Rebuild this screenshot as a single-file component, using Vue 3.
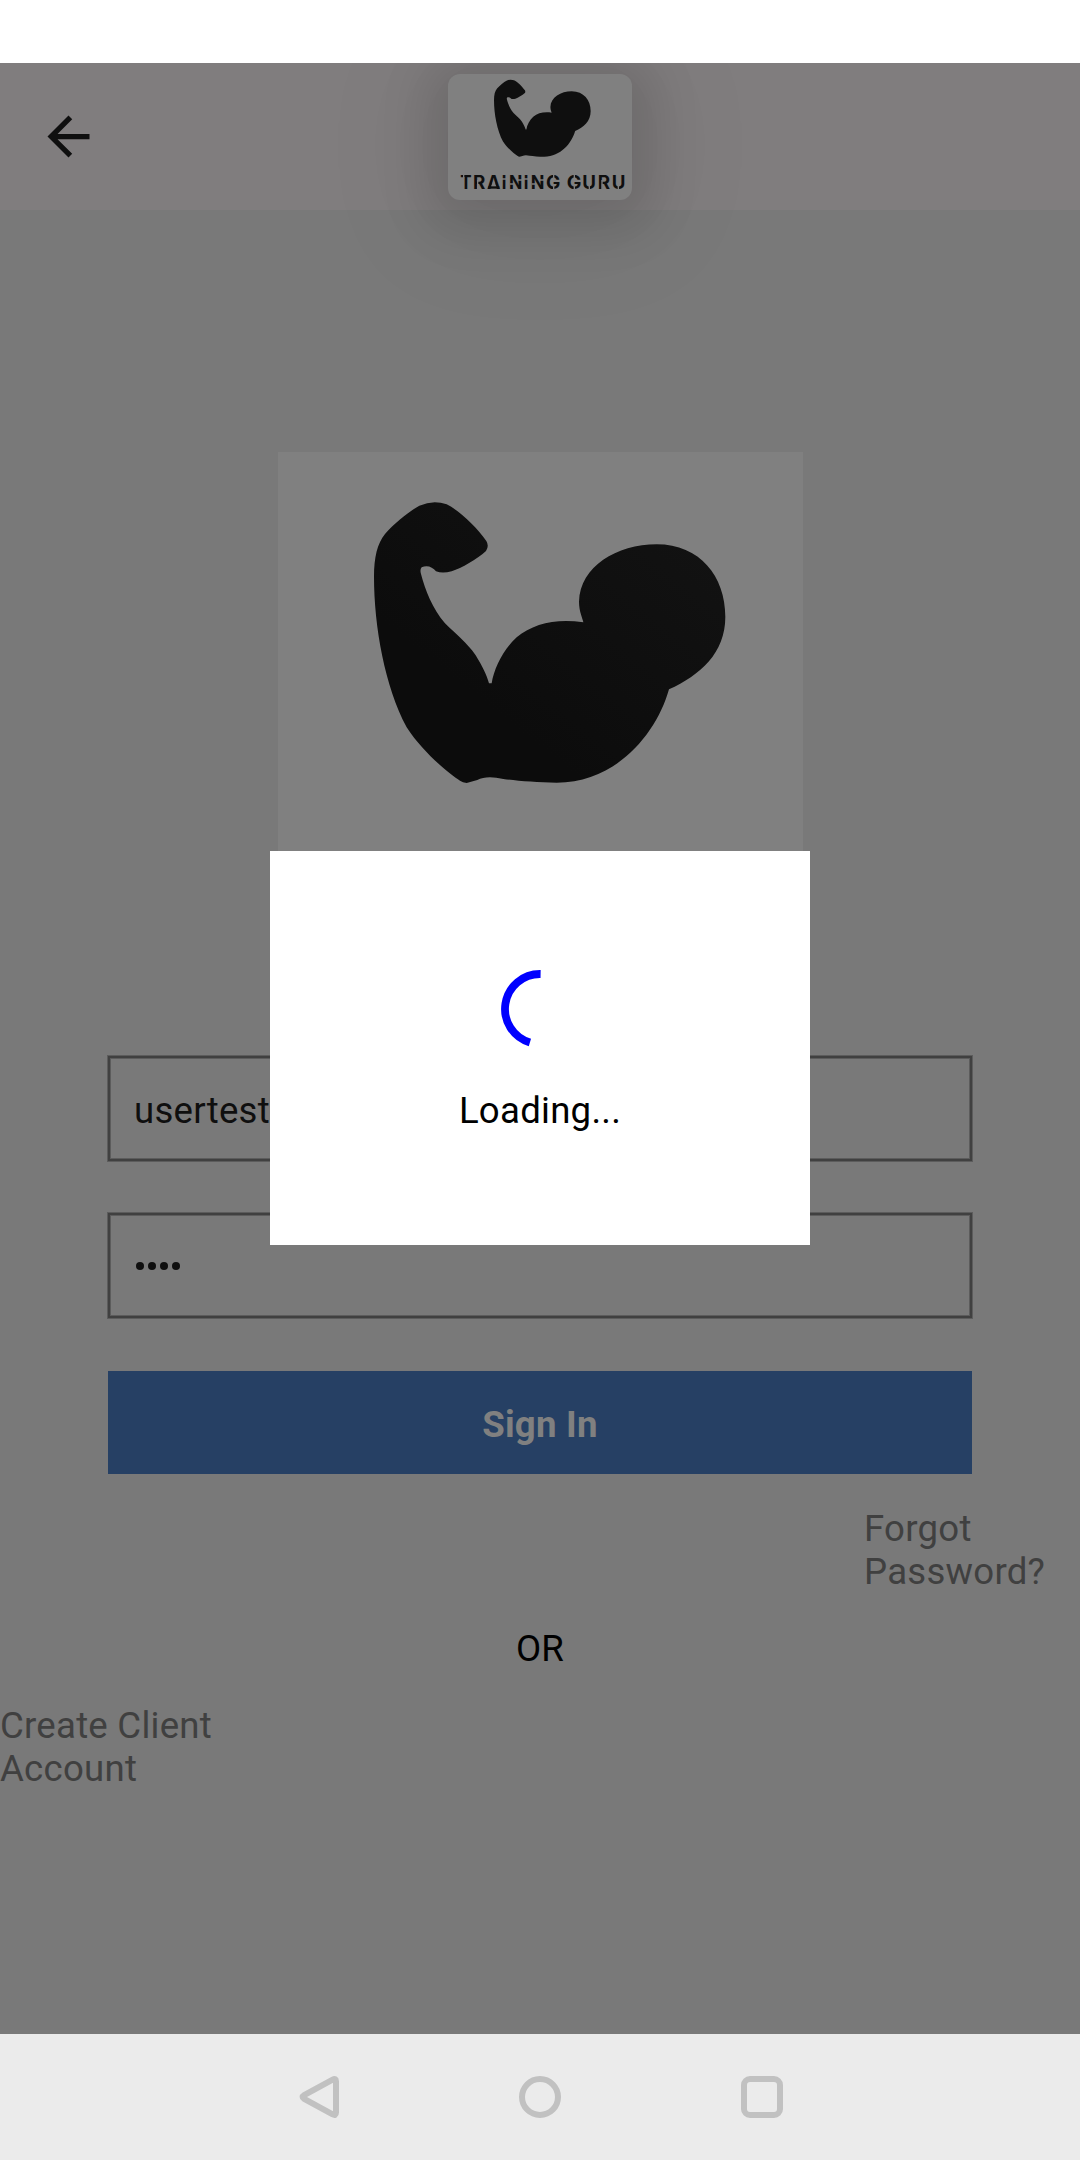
<script setup>
const armPath =
  'M312 410C312 352 322 310 345 282C375 248 420 212 448 197Q490 178 530 193C572 214 620 262 649 303Q658 318 648 333C620 358 575 384 545 394Q517 401 498 394C488 380 470 374 455 382Q449 389 453 402C465 448 488 508 525 550C560 585 590 607 617 646C638 680 650 706 657 730L665 730C672 685 700 628 740 592C790 550 860 535 940 547C938 535 927 515 927 485C930 380 1040 313 1160 313C1290 313 1366 410 1366 530C1366 640 1290 705 1197 748C1160 880 1040 1028 860 1028C800 1028 740 1022 700 1017Q650 1005 622 1020L590 1029Q578 1028 570 1022C540 1002 460 940 410 862C345 740 312 560 312 410Z'

const wordmark = [
  { ch: 'T', x: 121, w: 34 },
  { ch: 'R', x: 159, w: 37 },
  { ch: 'A', x: 201, w: 40 },
  { ch: 'I', x: 245, w: 14 },
  { ch: 'N', x: 267, w: 40 },
  { ch: 'I', x: 311, w: 14 },
  { ch: 'N', x: 332, w: 41 },
  { ch: 'G', x: 378, w: 43 },
  { ch: 'G', x: 440, w: 44 },
  { ch: 'U', x: 487, w: 41 },
  { ch: 'R', x: 533, w: 37 },
  { ch: 'U', x: 575, w: 41 },
]
</script>

<template>
  <div class="screen">
    <div class="status"></div>
    <header class="header">
      <svg class="back" viewBox="0 0 24 24">
        <path d="M20 11H7.83l5.59-5.59L12 4l-8 8 8 8 1.41-1.41L7.83 13H20v-2z" />
      </svg>
      <div class="brand">
        <svg viewBox="84 72 552 378">
          <path :d="armPath" fill="#0f0f0f" transform="translate(136.2 38) scale(.2751 .2743)" />
          <text
            v-for="(l, i) in wordmark"
            :key="i"
            :x="l.x"
            y="416"
            :textLength="l.w"
            lengthAdjust="spacingAndGlyphs"
            class="glyph"
          >{{ l.ch }}</text>
          <path d="M221 391L213 409H229Z" fill="#808080" />
          <rect x="205" y="409" width="33" height="7" fill="#0f0f0f" />
          <g stroke="#808080" stroke-width="4">
            <path d="M131 374v10M173 390v28M244 387h18M310 387h18M270 402h12M292 390h14M335 402h12M358 390h14M401 374v12M401 406v12M463 374v12M463 406v12M508 404v16M546 390v28M595 404v16" />
          </g>
        </svg>
      </div>
    </header>

    <main class="content">
      <div class="hero">
        <svg viewBox="24 36 1575 1230">
          <defs>
            <linearGradient id="arm" x1="0" y1="1" x2="1" y2="0">
              <stop offset="0.3" stop-color="#0c0c0c" />
              <stop offset="1" stop-color="#131313" />
            </linearGradient>
          </defs>
          <path :d="armPath" fill="url(#arm)" />
        </svg>
      </div>
      <div class="field"><span>usertest</span></div>
      <div class="field dots"><i v-for="n in 4" :key="n"></i></div>
      <div class="button">Sign In</div>
      <div class="forgot">Forgot Password?</div>
      <div class="or">OR</div>
      <div class="create">Create Client Account</div>
    </main>

    <nav class="nav">
      <svg viewBox="0 0 42 42"><path d="M35.6 3.6Q39 2 39 5.4V36.6Q39 40 35.6 38.4L7.2 23Q4 21 7.2 19Z" /></svg>
      <svg viewBox="0 0 42 42"><circle cx="21" cy="21" r="18" /></svg>
      <svg viewBox="0 0 42 42"><rect x="3" y="3" width="36" height="36" rx="6" /></svg>
    </nav>

    <div class="modal">
      <svg viewBox="0 0 80 80"><path d="M40.6 5A35 35 0 0 0 29.9 73.5" /></svg>
      <p>Loading...</p>
    </div>
  </div>
</template>

<style>
body {
  margin: 0;
}
</style>

<style scoped>
.screen {
  position: relative;
  width: 1080px;
  height: 2160px;
  display: flex;
  flex-direction: column;
  overflow: hidden;
  background: #797979;
  font: 36.6px/43px Roboto, sans-serif;
  letter-spacing: 0.25px;
}
.status {
  position: relative;
  z-index: 2;
  height: 63px;
  background: #fff;
}
.header {
  display: flex;
  position: relative;
  z-index: 1;
  box-sizing: border-box;
  height: 147px;
  padding: 11px 0 0 37px;
  background: #807d7e;
}
.back {
  width: 63px;
  height: 63px;
  margin-top: 31px;
  fill: #0f0f0f;
}
.brand {
  width: 184px;
  height: 126px;
  margin-left: 348px;
  border-radius: 12px;
  background: #808080;
  box-shadow: 0 8px 50px 20px rgba(0, 0, 0, 0.12), 0 8px 110px 36px rgba(0, 0, 0, 0.05);
}
.brand svg {
  display: block;
  width: 184px;
  height: 126px;
}
.glyph {
  font: 700 55px Inter, sans-serif;
  letter-spacing: 0;
  fill: #0f0f0f;
}
.content {
  display: flex;
  flex-direction: column;
  height: 1824px;
}
.hero {
  width: 525px;
  height: 410px;
  margin: 242px 0 193px 278px;
  background: #808080;
}
.hero svg {
  display: block;
  width: 525px;
  height: 410px;
}
.field {
  display: flex;
  align-items: center;
  box-sizing: border-box;
  width: 866px;
  height: 107px;
  margin: 0 0 50px 107px;
  padding: 0 26px;
  border: 1px solid #5c5c5c;
  box-shadow: inset 0 0 0 2px #404040, inset 0 0 0 3px #5c5c5c;
  color: #0f0f0f;
}
.field span {
  padding-top: 3px;
}
.dots {
  gap: 4px;
  padding-left: 28px;
}
.dots i {
  width: 8px;
  height: 8px;
  border-radius: 50%;
  background: #0f0f0f;
}
.button {
  width: 864px;
  height: 103px;
  margin: 2px 0 0 108px;
  background: #264064;
  color: #808080;
  font-weight: 700;
  line-height: 107px;
  text-align: center;
}
.forgot {
  width: 216px;
  margin: 33px 0 0 864px;
  color: #404040;
}
.or {
  margin-top: 34px;
  color: #000;
  text-align: center;
}
.create {
  width: 216px;
  margin-top: 34px;
  color: #404040;
}
.nav {
  display: flex;
  align-items: center;
  justify-content: center;
  gap: 180px;
  height: 126px;
  background: #ebebeb;
}
.nav svg {
  width: 42px;
  height: 42px;
  fill: none;
  stroke: #c1c1c1;
  stroke-width: 6;
}
.modal {
  position: absolute;
  z-index: 3;
  top: 851px;
  left: 270px;
  display: flex;
  flex-direction: column;
  align-items: center;
  box-sizing: border-box;
  width: 540px;
  height: 394px;
  padding-top: 118px;
  background: #fff;
}
.modal svg {
  width: 80px;
  height: 80px;
  fill: none;
  stroke: #00f;
  stroke-width: 7.8;
}
.modal p {
  margin: 40px 0 0;
  color: #000;
}
</style>
